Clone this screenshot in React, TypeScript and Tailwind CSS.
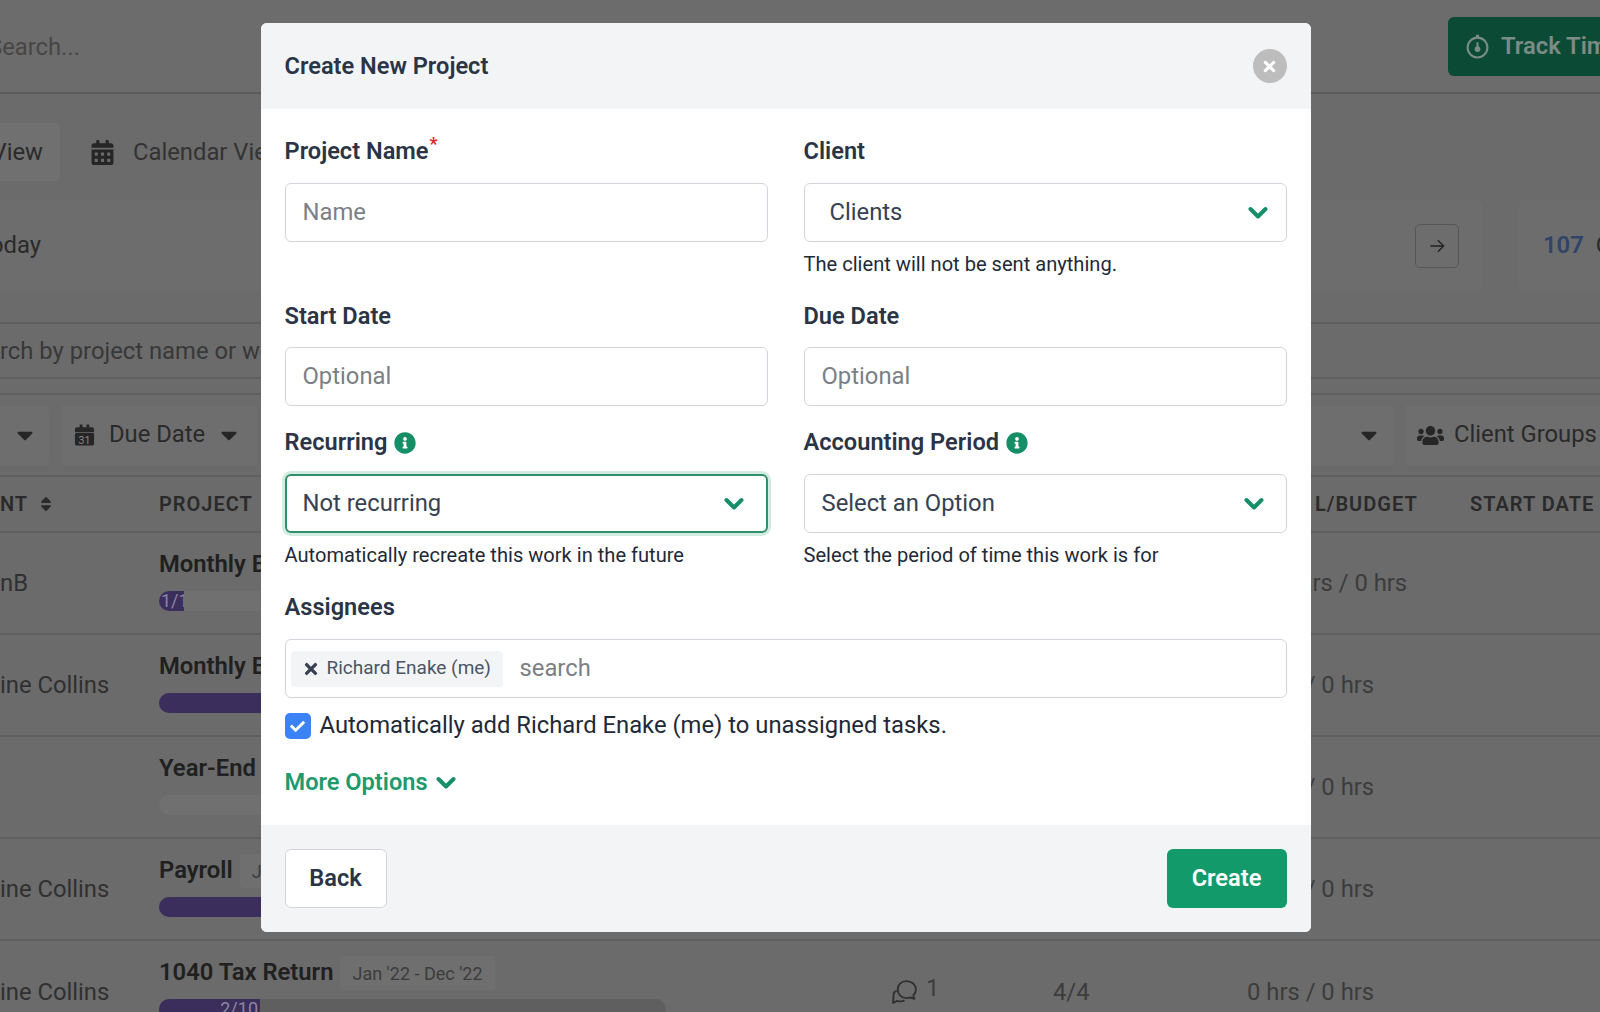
import { FaCaretDown, FaCheck, FaInfoCircle, FaSort, FaTimes, FaUsers, FaCalendarAlt } from "react-icons/fa";

const rows = [
  { client: "nB", title: "Monthly Bookkeeping", fill: 25, label: "1/1", align: "justify-start pl-[2px]", track: "bg-[#707070]", hrs: "0.25 hrs / 0 hrs" },
  { client: "ine Collins", title: "Monthly Bookkeeping", fill: 300, label: "", align: "justify-end", track: "bg-[#5f5f5f]", hrs: "0 hrs / 0 hrs" },
  { client: "", title: "Year-End Close", fill: 0, label: "", align: "justify-end", track: "bg-[#707070]", hrs: "0 hrs / 0 hrs" },
  { client: "ine Collins", title: "Payroll", fill: 300, label: "", align: "justify-end", track: "bg-[#5f5f5f]", hrs: "0 hrs / 0 hrs", chip: "Jan '22 - Dec '22" },
  { client: "ine Collins", title: "1040 Tax Return", fill: 101, label: "2/10", align: "justify-end", track: "bg-[#5f5f5f]", hrs: "0 hrs / 0 hrs", chip: "Jan '22 - Dec '22", comments: "1", tasks: "4/4" },
];

function Chevron() {
  return (
    <svg viewBox="0 0 20 14" className="h-[14px] w-[20px] shrink-0 text-[#168f66]" fill="none" stroke="currentColor" strokeWidth="4" strokeLinecap="round" strokeLinejoin="round">
      <path d="M2.500 3l7.500 7.500L17.500 3" />
    </svg>
  );
}

function Label({ children, info }: { children: React.ReactNode; info?: boolean }) {
  return (
    <div className="flex h-[36px] items-center gap-[7px] pt-[2px] text-[23.6px] font-semibold text-[#2b3445]">
      <span>{children}</span>
      {info && <FaInfoCircle className="text-[22px] text-[#168f66]" />}
    </div>
  );
}

function Field({ placeholder, first }: { placeholder: string; first?: boolean }) {
  return (
    <div className={`${first ? "mt-[14px]" : "mt-[13px]"} flex h-[59px] items-center rounded-[6px] border-[1.5px] border-[#d1d5db] bg-white pl-[17px] text-[23.8px] text-[#7b7f86]`}>
      {placeholder}
    </div>
  );
}

function Background() {
  return (
    <div className="h-full text-[23.8px] text-[#2a2a2a]">
      {/* top bar */}
      <div className="flex h-[94px] items-center justify-between border-b-2 border-[#5c5c5c] bg-[#6c6c6c]">
        <div className="-ml-[12px] pt-[3px] text-[#464646]">Search...</div>
        <div className="flex h-[59px] w-[152px] items-center gap-[11px] rounded-l-[6px] bg-[#0b4a34] pl-[17px] text-[23.8px] font-semibold text-[#7b8b85]">
          <svg viewBox="0 0 24 24" className="h-[25px] w-[25px] shrink-0" fill="none" stroke="currentColor" strokeWidth="2">
            <circle cx="12" cy="13" r="9.500" />
            <path d="M10.500 1.800h3M12 8v5" />
            <circle cx="12" cy="14.500" r="1.800" fill="currentColor" />
          </svg>
          <span className="whitespace-nowrap pt-[2px]">Track Time</span>
        </div>
      </div>

      {/* tabs */}
      <div className="mt-[29px] flex h-[58px] items-center">
        <div className="flex h-full w-[60px] items-center justify-end rounded-r-[4px] bg-[#707070] pr-[17px] pt-[2px]">View</div>
        <FaCalendarAlt className="ml-[30px] text-[25px] text-[#262626]" />
        <span className="ml-[18px] pt-[2px] text-[#333]">Calendar View</span>
      </div>

      {/* stat cards */}
      <div className="mt-[19px] flex h-[91px] gap-[35px]">
        <div className="flex w-[1483px] shrink-0 items-center justify-between rounded-r-[8px] bg-[#6d6d6d] pr-[24px]">
          <span className="-ml-[10px]">oday</span>
          <div className="flex h-[44px] w-[44px] items-center justify-center rounded-[5px] border border-[#565656] text-[#222]">
            <svg viewBox="0 0 24 24" className="h-[20px] w-[20px]" fill="none" stroke="currentColor" strokeWidth="1.6">
              <path d="M4 12h16M13 5l7 7-7 7" />
            </svg>
          </div>
        </div>
        <div className="flex flex-1 items-center gap-[12px] rounded-l-[8px] bg-[#6d6d6d] pl-[25px]">
          <span className="font-semibold text-[#2f4468]">107</span>
          <span>O</span>
        </div>
      </div>

      {/* project search */}
      <div className="mt-[31px] flex h-[57px] items-center border-y-2 border-[#5f5f5f] pt-[2px] text-[#383838]">rch by project name or work</div>

      {/* filters */}
      <div className="mt-[14px] flex h-[84px] items-center justify-between border-y-2 border-[#5f5f5f]">
        <div className="flex h-[60px] gap-[12px]">
          <div className="flex w-[49px] items-center justify-center rounded-r-[4px] bg-[#6e6e6e]">
            <FaCaretDown className="text-[26px] text-[#262626]" />
          </div>
          <div className="flex w-[196px] items-center rounded-[4px] bg-[#6e6e6e] pl-[13px]">
            <svg viewBox="0 0 22 24" className="h-[24px] w-[21px] shrink-0 text-[#262626]" fill="currentColor">
              <path d="M1 6a2 2 0 0 1 2-2h3V1h3v3h4V1h3v3h3a2 2 0 0 1 2 2v3H1z" />
              <rect x="1" y="10" width="20" height="13" rx="1.500" />
              <text x="11" y="21" textAnchor="middle" fontSize="11" fill="#8a8a8a" fontFamily="Roboto, sans-serif">31</text>
            </svg>
            <span className="ml-[14px] whitespace-nowrap">Due Date</span>
            <FaCaretDown className="ml-[11px] text-[26px] text-[#262626]" />
          </div>
        </div>
        <div className="flex h-[60px] gap-[11px]">
          <div className="flex w-[120px] items-center justify-end rounded-[4px] bg-[#6e6e6e] pr-[12px]">
            <FaCaretDown className="text-[26px] text-[#262626]" />
          </div>
          <div className="flex w-[195px] items-center rounded-l-[4px] bg-[#6e6e6e] pl-[12px]">
            <FaUsers className="shrink-0 text-[27px] text-[#262626]" />
            <span className="ml-[10px] whitespace-nowrap">Client Groups</span>
          </div>
        </div>
      </div>

      {/* table head */}
      <div className="flex h-[56px] items-center border-b-2 border-[#5f5f5f] text-[20px] font-semibold tracking-[1px] text-[#2a2a2a]">
        <div className="flex w-[159px] items-center">
          <span>NT</span>
          <FaSort className="ml-[9px] text-[18px]" />
        </div>
        <span className="w-[1156px]">PROJECT</span>
        <span className="w-[114px] whitespace-nowrap">L/BUDGET</span>
        <span className="ml-[41px] whitespace-nowrap">START DATE</span>
      </div>

      {/* table rows */}
      {rows.map((row, i) => (
        <div key={i} className="flex h-[102px] items-center border-b-2 border-[#5f5f5f] last:border-b-0">
          <div className="w-[159px] whitespace-nowrap pt-[2px] text-[#303030]">{row.client}</div>
          <div className="flex h-full w-[732px] flex-col pt-[15px]">
            <div className="flex h-[34px] items-center gap-[7px]">
              <span className="font-semibold text-[#202020]">{row.title}</span>
              {row.chip && (
                <span className="flex h-[34px] items-center rounded-[4px] bg-[#6f6f6f] px-[12px] text-[18px] text-[#3c3c3c]">{row.chip}</span>
              )}
            </div>
            <div className={`mt-[9px] h-[20px] w-[507px] overflow-hidden rounded-full ${row.track}`}>
              {row.fill > 0 && (
                <div className={`flex h-full overflow-hidden whitespace-nowrap bg-[#3b2e5c] pr-[2px] text-[18px] leading-[20px] text-[#8b86a0] ${row.align}`} style={{ width: row.fill }}>
                  {row.label}
                </div>
              )}
            </div>
          </div>
          <div className="flex w-[162px] items-center gap-[8px] text-[#3c3c3c]">
            {row.comments && (
              <>
                <svg viewBox="0 0 26 26" className="h-[27px] w-[27px]" fill="none" stroke="#303030" strokeWidth="1.800" strokeLinejoin="round">
                  <path d="M15 2c5 0 9 3.400 9 8 0 2.400-1 4.400-2.500 5.800l1 3.200-4-1.200c-1.100.4-2.300.6-3.500.6-5 0-8.500-3.600-8.500-8.400S10 2 15 2z" />
                  <path d="M5.500 11.500C3.500 12 2.500 13.500 2.500 15l-.5 8 4-2c2.500.8 5 .8 7-.6" />
                </svg>
                <span className="-mt-[6px]">{row.comments}</span>
              </>
            )}
          </div>
          <div className="w-[194px] pt-[2px] text-[#3c3c3c]">{row.tasks}</div>
          <div className="whitespace-nowrap pt-[2px] text-[#3c3c3c]">{row.hrs}</div>
        </div>
      ))}
    </div>
  );
}

export default function App() {
  return (
    <div className="relative h-[1012px] w-[1600px] overflow-hidden bg-[#6b6b6b] font-['Roboto',sans-serif]">
      <Background />

      {/* modal */}
      <div className="absolute left-[260.500px] top-[23px] flex h-[909px] w-[1050px] flex-col overflow-hidden rounded-[6px] bg-white">
        <div className="flex h-[86px] shrink-0 items-center justify-between bg-[#f3f4f6] pl-[24px] pr-[24px]">
          <h2 className="pt-[2px] text-[23.6px] font-semibold text-[#2b3445]">Create New Project</h2>
          <button className="flex h-[34px] w-[34px] items-center justify-center rounded-full bg-[#bdbdbd]">
            <FaTimes className="text-[17px] text-white" />
          </button>
        </div>

        <div className="flex-1 px-[24px] pt-[24px]">
          <div className="grid grid-cols-2 gap-x-[36px]">
            <div>
              <Label>
                Project Name<sup className="ml-[1px] text-[18px] text-[#dc2626]">*</sup>
              </Label>
              <Field first placeholder="Name" />
            </div>
            <div>
              <Label>Client</Label>
              <div className="mt-[14px] flex h-[59px] items-center justify-between rounded-[6px] border-[1.5px] border-[#d1d5db] bg-white pl-[25px] pr-[18px] text-[23.8px] text-[#374151]">
                Clients
                <Chevron />
              </div>
              <p className="mt-[6px] text-[20.1px] leading-[32px] text-[#1f2937]">The client will not be sent anything.</p>
            </div>
          </div>

          <div className="mt-[18px] grid grid-cols-2 gap-x-[36px]">
            <div>
              <Label>Start Date</Label>
              <Field placeholder="Optional" />
            </div>
            <div>
              <Label>Due Date</Label>
              <Field placeholder="Optional" />
            </div>
          </div>

          <div className="mt-[18px] grid grid-cols-2 gap-x-[36px]">
            <div>
              <Label info>Recurring</Label>
              <div className="mt-[14px] flex h-[59px] items-center justify-between rounded-[6px] border-[2px] border-[#2f8f6c] bg-white pl-[16px] pr-[22px] text-[23.8px] text-[#374151] shadow-[0_0_0_3px_#d3ece2]">
                Not recurring
                <Chevron />
              </div>
              <p className="mt-[6px] text-[20.1px] leading-[32px] text-[#1f2937]">Automatically recreate this work in the future</p>
            </div>
            <div>
              <Label info>Accounting Period</Label>
              <div className="mt-[14px] flex h-[59px] items-center justify-between rounded-[6px] border-[1.5px] border-[#d1d5db] bg-white pl-[17px] pr-[22px] text-[23.8px] text-[#374151]">
                Select an Option
                <Chevron />
              </div>
              <p className="mt-[6px] text-[20.1px] leading-[32px] text-[#1f2937]">Select the period of time this work is for</p>
            </div>
          </div>

          <div className="mt-[18px]">
            <Label>Assignees</Label>
            <div className="mt-[14px] flex h-[59px] items-center rounded-[6px] border-[1.5px] border-[#d1d5db] bg-white pl-[5px]">
              <div className="flex h-[36px] w-[212px] items-center rounded-[4px] bg-[#f3f4f6] pl-[11px] text-[19px] text-[#4b5563]">
                <FaTimes className="mr-[7px] text-[18px] text-[#374151]" />
                Richard Enake (me)
              </div>
              <span className="ml-[17px] text-[23.8px] text-[#7b7f86]">search</span>
            </div>
          </div>

          <div className="mt-[14px] flex h-[28px] items-center gap-[9px] text-[23.8px] text-[#1f2937]">
            <div className="flex h-[26px] w-[26px] items-center justify-center rounded-[5px] bg-[#3b82f6]">
              <FaCheck className="text-[15px] text-white" />
            </div>
            Automatically add Richard Enake (me) to unassigned tasks.
          </div>

          <div className="mt-[25px] flex h-[36px] items-center gap-[8px] text-[23.6px] font-semibold text-[#1f9a6d]">
            More Options
            <Chevron />
          </div>
        </div>

        <div className="flex h-[107px] shrink-0 items-center justify-between bg-[#f3f4f6] px-[24px]">
          <button className="flex h-[59px] w-[102px] items-center justify-center rounded-[6px] border-[1.5px] border-[#d1d5db] bg-white pt-[1px] text-[23.6px] font-semibold text-[#2b3445]">
            Back
          </button>
          <button className="flex h-[59px] w-[120px] items-center justify-center rounded-[6px] bg-[#129a6b] pt-[1px] text-[23.6px] font-semibold text-white">
            Create
          </button>
        </div>
      </div>
    </div>
  );
}
